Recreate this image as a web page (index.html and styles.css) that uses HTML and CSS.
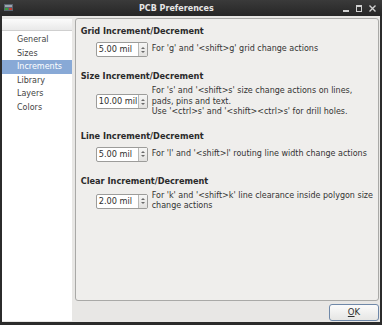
FILE: index.html
```html
<!DOCTYPE html>
<html lang="en">
<head>
    <meta charset="UTF-8">
    <title>PCB Preferences</title>
    <link rel="stylesheet" href="styles.css">
</head>
<body>
    <div class="window">
        <div class="titlebar">
            <svg class="app-icon" width="9" height="7" viewBox="0 0 9 7">
                <rect x="0" y="0" width="9" height="7" fill="#5a6470"/>
                <rect x="1" y="1" width="7" height="2" fill="#9aa4ae"/>
                <rect x="1" y="4" width="3" height="2" fill="#3c9a3c"/>
                <rect x="5" y="4" width="3" height="2" fill="#c23a2e"/>
            </svg>
            <span class="title">PCB Preferences</span>
            <div class="controls">
                <span class="ctl-min"></span>
                <span class="ctl-max"></span>
                <svg class="ctl-close" width="7" height="7" viewBox="0 0 7 7">
                    <path d="M0.5 0.5 L6.5 6.5 M6.5 0.5 L0.5 6.5" stroke="#d0d0d0" stroke-width="1.4"/>
                </svg>
            </div>
        </div>

        <div class="content">
            <div class="sidebar">
                <div class="list-header"></div>
                <ul class="pages">
                    <li>General</li>
                    <li>Sizes</li>
                    <li class="selected">Increments</li>
                    <li>Library</li>
                    <li>Layers</li>
                    <li>Colors</li>
                </ul>
            </div>

            <div class="main">
                <div class="panel">
                    <div class="section">
                        <h3>Grid Increment/Decrement</h3>
                        <div class="row">
                            <div class="spin"><span class="spin-value">5.00 mil</span><span class="spin-btn"><i class="up"></i><i class="down"></i></span></div>
                            <p>For 'g' and '&lt;shift&gt;g' grid change actions</p>
                        </div>
                    </div>
                    <div class="section">
                        <h3>Size Increment/Decrement</h3>
                        <div class="row">
                            <div class="spin"><span class="spin-value">10.00 mil</span><span class="spin-btn"><i class="up"></i><i class="down"></i></span></div>
                            <p>For 's' and '&lt;shift&gt;s' size change actions on lines,<br>pads, pins and text.<br>Use '&lt;ctrl&gt;s' and '&lt;shift&gt;&lt;ctrl&gt;s' for drill holes.</p>
                        </div>
                    </div>
                    <div class="section">
                        <h3>Line Increment/Decrement</h3>
                        <div class="row">
                            <div class="spin"><span class="spin-value">5.00 mil</span><span class="spin-btn"><i class="up"></i><i class="down"></i></span></div>
                            <p>For 'l' and '&lt;shift&gt;l' routing line width change actions</p>
                        </div>
                    </div>
                    <div class="section">
                        <h3>Clear Increment/Decrement</h3>
                        <div class="row">
                            <div class="spin"><span class="spin-value">2.00 mil</span><span class="spin-btn"><i class="up"></i><i class="down"></i></span></div>
                            <p>For 'k' and '&lt;shift&gt;k' line clearance inside polygon size<br>change actions</p>
                        </div>
                    </div>
                </div>
                <div class="buttons">
                    <button class="ok"><u>O</u>K</button>
                </div>
            </div>
        </div>
    </div>
</body>
</html>
```

FILE: styles.css
```css
body {
    margin: 0;
    font-family: "DejaVu Sans", sans-serif;
    font-size: 8px;
    color: #2e2e2e;
}
.window {
    width: 382px;
    height: 325px;
    box-sizing: border-box;
    background: #e8e7e5;
    border: 2px solid #2b2b2b;
    border-top: 0;
    border-bottom-width: 3px;
    display: flex;
    flex-direction: column;
}
.titlebar {
    height: 16px;
    margin: 0 -2px;
    background: linear-gradient(#3a3a3a, #262626);
    display: flex;
    align-items: center;
    position: relative;
}
.app-icon {
    margin-left: 4px;
    margin-top: -1px;
}
.title {
    position: absolute;
    left: 139px;
    color: #e6e6e6;
    font-weight: bold;
    font-size: 8px;
    white-space: nowrap;
}
.controls {
    margin-left: auto;
    margin-right: 6px;
    display: flex;
    align-items: center;
    gap: 7px;
}
.ctl-min {
    width: 6px;
    height: 2px;
    background: #d0d0d0;
    margin-top: 6px;
}
.ctl-max {
    width: 4px;
    height: 4px;
    border: 1px solid #d0d0d0;
    border-top-width: 2px;
}
.content {
    flex: 1;
    display: flex;
    gap: 3px;
    padding: 2px 1px 1px 0;
}
.sidebar {
    width: 71px;
    margin-top: 1px;
    background: #fff;
}
.list-header {
    height: 11px;
    background: linear-gradient(#fbfbfb, #e9e9e9);
    border-bottom: 1px solid #cfcfcf;
}
.pages {
    list-style: none;
    margin: 0;
    padding: 2px 0 0;
}
.pages li {
    height: 13.6px;
    line-height: 13.6px;
    padding-left: 15px;
    font-size: 8px;
    color: #444;
}
.pages li.selected {
    background: #88a9d6;
    color: #fff;
}
.main {
    flex: 1;
    display: flex;
    flex-direction: column;
}
.panel {
    height: 283px;
    box-sizing: border-box;
    background: #efeeec;
    border: 1px solid #a9a9a7;
    border-radius: 3px;
    padding: 6px 5px 0;
}
.section {
    margin-bottom: 12px;
}
h3 {
    margin: 0 0 4px;
    height: 12px;
    line-height: 12px;
    font-size: 8.2px;
    font-weight: bold;
    color: #2a2a2a;
}
.row {
    display: flex;
    align-items: center;
    min-height: 17px;
    padding-left: 15px;
}
.spin {
    width: 52px;
    height: 15px;
    box-sizing: border-box;
    display: flex;
    background: #fff;
    border: 1px solid #9c9c9a;
    border-radius: 2px;
    flex-shrink: 0;
}
.spin-value {
    flex: 1;
    padding-left: 2px;
    line-height: 13px;
    font-size: 8.2px;
    white-space: nowrap;
    overflow: hidden;
}
.spin-btn {
    width: 8px;
    border-left: 1px solid #b8b8b6;
    background: linear-gradient(#f6f6f5, #e2e1df);
    display: flex;
    flex-direction: column;
    align-items: center;
    justify-content: center;
    gap: 2px;
}
.spin-btn i {
    width: 0;
    height: 0;
    border-left: 2px solid transparent;
    border-right: 2px solid transparent;
}
.spin-btn .up {
    border-bottom: 2px solid #6a6a6a;
}
.spin-btn .down {
    border-top: 2px solid #6a6a6a;
}
.row p {
    margin: 0 0 0 4px;
    line-height: 10.5px;
    white-space: nowrap;
    color: #333;
}
.buttons {
    flex: 1;
    display: flex;
    justify-content: flex-end;
    align-items: center;
    padding-top: 2px;
}
.ok {
    width: 50px;
    height: 17px;
    font-family: "DejaVu Sans", sans-serif;
    font-size: 8.5px;
    color: #2e2e2e;
    background: linear-gradient(#fbfbfb, #e6e6e4);
    border: 1px solid #6f88a8;
    border-radius: 3px;
    padding: 0;
}
```
